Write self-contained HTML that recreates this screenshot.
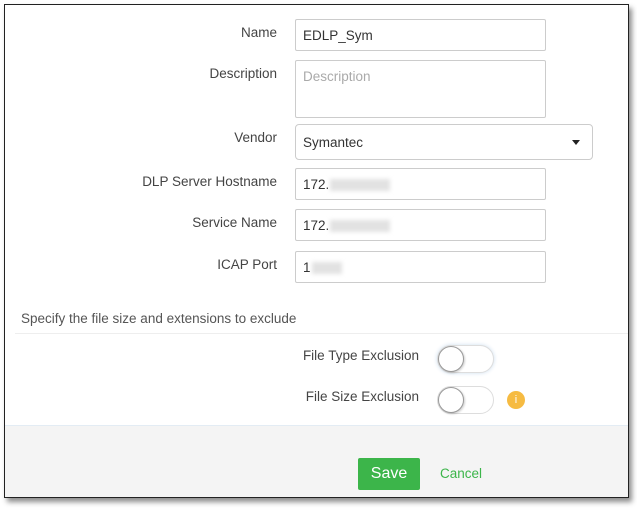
<!DOCTYPE html>
<html><head><style>
body{margin:0;width:637px;height:509px;background:#fff;font-family:"Liberation Sans",sans-serif;position:relative;overflow:hidden}
.frame{position:absolute;left:4px;top:4px;width:623px;height:492px;border:1px solid #222;background:#fff;box-shadow:3px 4px 5px rgba(0,0,0,.45);overflow:hidden}
.lbl{position:absolute;right:351px;font-size:13.5px;color:#444;text-align:right;white-space:nowrap}
.in{position:absolute;left:290px;width:251px;height:32px;border:1px solid #ccc;border-radius:2px;box-sizing:border-box;font-size:13.5px;color:#333;padding:8px 7px;background:#fff}
.blur{display:inline-block;width:60px;height:12px;background:#e2e2e2;filter:blur(2px);vertical-align:middle;margin-left:1px}
.tg{position:absolute;left:432px;width:57px;height:28px;border:1px solid #ddd;border-radius:14px;box-sizing:border-box;background:#fff}
.tg:before{content:"";position:absolute;left:0;top:0;width:26px;height:26px;border-radius:50%;border:1px solid #999;box-sizing:border-box;background:#fff;box-shadow:1px 1px 2px rgba(0,0,0,.2)}
</style></head><body>
<div class="frame">
<div class="lbl" style="top:20px">Name</div>
<div class="in" style="top:14px">EDLP_Sym</div>
<div class="lbl" style="top:61px">Description</div>
<div class="in" style="top:55px;height:58px;color:#aaa">Description</div>
<div class="lbl" style="top:125px">Vendor</div>
<div class="in" style="top:119px;width:298px;height:36px;padding:10px 7px;border-radius:4px">Symantec<span style="position:absolute;right:12px;top:15px;border:4px solid transparent;border-top:5px solid #222;border-bottom:0"></span></div>
<div class="lbl" style="top:169px">DLP Server Hostname</div>
<div class="in" style="top:163px">172.<span class="blur"></span></div>
<div class="lbl" style="top:210px">Service Name</div>
<div class="in" style="top:204px">172.<span class="blur"></span></div>
<div class="lbl" style="top:252px">ICAP Port</div>
<div class="in" style="top:246px">1<span class="blur" style="width:30px"></span></div>
<div style="position:absolute;left:16px;top:306px;font-size:13.5px;color:#555">Specify the file size and extensions to exclude</div>
<div style="position:absolute;left:10px;right:0;top:328px;border-top:1px solid #eee"></div>
<div class="lbl" style="top:343px;right:209px">File Type Exclusion</div>
<div class="tg" style="top:340px;box-shadow:0 0 4px #cde"></div>
<div class="lbl" style="top:384px;right:209px">File Size Exclusion</div>
<div class="tg" style="top:381px"></div>
<div style="position:absolute;left:502px;top:386px;width:18px;height:18px;border-radius:50%;background:#f6bb42;color:#fff;font-size:11px;text-align:center;line-height:18px">i</div>
<div style="position:absolute;left:0;right:0;top:420px;bottom:0;background:#f4f4f4;border-top:1px solid #e3ecf4"></div>
<div style="position:absolute;left:353px;top:453px;width:62px;height:32px;background:#3cb54a;border-radius:2px;color:#fff;font-size:16px;text-align:center;line-height:32px">Save</div>
<div style="position:absolute;left:435px;top:461px;font-size:13.5px;color:#3cb54a">Cancel</div>
</div>
</body></html>
